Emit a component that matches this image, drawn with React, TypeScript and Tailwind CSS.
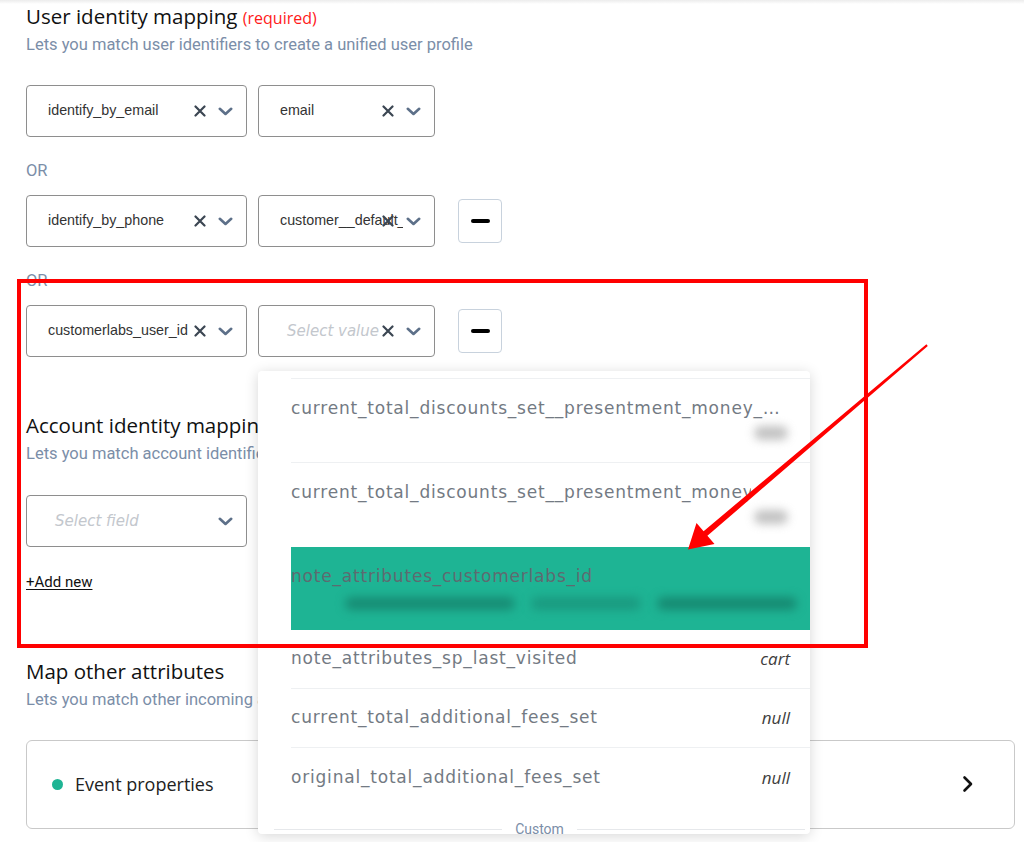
import React from "react";

const XIcon = () => (
  <svg width="12" height="12" viewBox="0 0 12 12" className="block">
    <path d="M1.5 1.5 L10.5 10.5 M10.5 1.5 L1.5 10.5" stroke="#3b4652" strokeWidth="2.2" strokeLinecap="round" />
  </svg>
);

const ChevronDown = () => (
  <svg width="15" height="9" viewBox="0 0 15 9" className="block">
    <path d="M1.8 1.8 L7.5 7 L13.2 1.8" fill="none" stroke="#5d7089" strokeWidth="2.6" strokeLinecap="round" strokeLinejoin="round" />
  </svg>
);

const ChevronRight = () => (
  <svg width="12" height="18" viewBox="0 0 12 18" className="block">
    <path d="M2.5 2.5 L9 9 L2.5 15.5" fill="none" stroke="#111" strokeWidth="2.6" strokeLinecap="round" strokeLinejoin="round" />
  </svg>
);

function Select({
  wide,
  text,
  placeholder,
  clear = true,
  children,
}: {
  wide: boolean;
  text?: string;
  placeholder?: string;
  clear?: boolean;
  children?: React.ReactNode;
}) {
  return (
    <div
      className={`relative flex h-[52px] items-center rounded-[4px] border border-[#8e8e8e] bg-white ${
        wide ? "w-[221px]" : "w-[177px]"
      }`}
    >
      {text ? (
        <span className="min-w-0 flex-1 overflow-hidden whitespace-nowrap pl-[21px] text-[14.3px] text-[#333] [font-family:'Liberation_Sans',Arial,sans-serif]">
          {text}
        </span>
      ) : (
        <span className="min-w-0 flex-1 overflow-hidden whitespace-nowrap pl-[28px] text-[15px] italic text-[#c3c7cd] [font-family:'DejaVu_Sans',sans-serif]">
          {placeholder}
        </span>
      )}
      {clear && (
        <span className="absolute right-[40px] top-1/2 -translate-y-1/2">
          <XIcon />
        </span>
      )}
      <span className="ml-[3px] mr-[13px]">
        <ChevronDown />
      </span>
      {children}
    </div>
  );
}

const MinusButton = () => (
  <div className="ml-[12px] flex h-[44px] w-[44px] items-center justify-center rounded-[4px] border border-[#c8d2dd] bg-white">
    <div className="h-[4px] w-[19px] rounded-full bg-black" />
  </div>
);

const labelCls =
  "text-[17px] tracking-[0.8px] text-[#737a83] [font-family:'DejaVu_Sans',sans-serif] whitespace-nowrap";

function Dropdown() {
  return (
    <div className="absolute left-[-1px] top-[65px] z-10 h-[463px] w-[552px] overflow-hidden rounded-[4px] bg-white shadow-[0_2px_14px_rgba(0,0,0,0.16)]">
      <div className="pl-[33px]">
        <div className="h-[8px] border-b border-[#eef0f2]" />
        <div className="relative h-[84px] border-b border-[#eef0f2] pt-[17px]">
          <div className={`${labelCls} w-[496px] overflow-hidden text-ellipsis`}>
            current_total_discounts_set__presentment_money_amount
          </div>
          <div className="flex justify-end pr-[22px] pt-[4px]">
            <div className="h-[14px] w-[34px] rounded-full bg-[#a8a8a8] opacity-70 blur-[5px]" />
          </div>
        </div>
        <div className="relative h-[84px] pt-[17px]">
          <div className={`${labelCls} w-[460px] overflow-hidden`}>current_total_discounts_set__presentment_money_amount</div>
          <div className="flex justify-end pr-[22px] pt-[4px]">
            <div className="h-[14px] w-[34px] rounded-full bg-[#a8a8a8] opacity-70 blur-[5px]" />
          </div>
        </div>
        <div className="h-[83px] bg-[#1eb494] pt-[17px]">
          <div className="whitespace-nowrap text-[17px] tracking-[0.8px] text-[#5e6a70] [font-family:'DejaVu_Sans',sans-serif]">
            note_attributes_customerlabs_id
          </div>
          <div className="flex items-center gap-[16px] pl-[54px] pt-[7px]">
            <div className="h-[13px] w-[170px] rounded-full bg-[#178c74] blur-[5px]" />
            <div className="h-[13px] w-[110px] rounded-full bg-[#1a9a80] blur-[5px]" />
            <div className="h-[13px] w-[140px] rounded-full bg-[#168a72] blur-[5px]" />
          </div>
        </div>
        {[
          ["note_attributes_sp_last_visited", "cart"],
          ["current_total_additional_fees_set", "null"],
          ["original_total_additional_fees_set", "null"],
        ].map(([k, v], i) => (
          <div
            key={k}
            className={`flex h-[59px] items-center justify-between pr-[20px] ${
              i < 2 ? "border-b border-[#eef0f2]" : ""
            }`}
          >
            <span className={labelCls}>{k}</span>
            <span className="text-[17px] italic text-[#3d3d3d] [font-family:'Open_Sans',sans-serif]">{v}</span>
          </div>
        ))}
      </div>
      <div className="flex items-center gap-[13px] pl-[16px] pr-[5px] pt-[12px]">
        <div className="h-px flex-1 bg-[#e6e8eb]" />
        <span className="text-[14px] text-[#7b8ea8] [font-family:'Roboto',sans-serif]">Custom</span>
        <div className="h-px flex-1 bg-[#e6e8eb]" />
      </div>
    </div>
  );
}

const headingCls =
  "text-[20.5px] font-medium text-[#111] [font-family:'Open_Sans',sans-serif] leading-[24px] whitespace-nowrap";
const subCls =
  "text-[16.5px] leading-[20px] text-[#7b8ea8] [font-family:'Roboto',sans-serif] whitespace-nowrap";

export default function App() {
  return (
    <div className="relative min-h-[842px] w-[1024px] overflow-hidden bg-white">
      <div className="h-[4px] bg-gradient-to-b from-[#ececec] to-white" />
      <div className="pl-[26px] pr-[9px]">
        <div className={headingCls}>
          User identity mapping{" "}
          <span className="text-[16px] font-normal text-[#ff1a1a]">(required)</span>
        </div>
        <div className={`${subCls} mt-[5px]`}>Lets you match user identifiers to create a unified user profile</div>

        <div className="mt-[30px] flex items-center gap-[11px]">
          <Select wide text="identify_by_email" />
          <Select wide={false} text="email" />
        </div>

        <div className={`${subCls} mt-[24px]`}>OR</div>
        <div className="mt-[14px] flex items-center gap-[11px]">
          <Select wide text="identify_by_phone" />
          <Select wide={false} text="customer__default_address_phone" />
          <MinusButton />
        </div>

        <div className={`${subCls} mt-[24px]`}>OR</div>
        <div className="mt-[14px] flex items-center gap-[11px]">
          <Select wide text="customerlabs_user_id" />
          <Select wide={false} placeholder="Select value">
            <Dropdown />
          </Select>
          <MinusButton />
        </div>

        <div className={`${headingCls} mt-[56px]`}>Account identity mapping</div>
        <div className={`${subCls} mt-[7px]`}>Lets you match account identifiers to create a unified account profile</div>
        <div className="mt-[31px]">
          <Select wide placeholder="Select field" clear={false} />
        </div>
        <div className="mt-[24px] text-[15px] text-[#111] underline underline-offset-2 [font-family:'Roboto',sans-serif]">
          +Add new
        </div>

        <div className={`${headingCls} mt-[65px]`}>Map other attributes</div>
        <div className={`${subCls} mt-[7px]`}>Lets you match other incoming attributes to your destination fields</div>

        <div className="mt-[30px] flex h-[89px] items-center rounded-[6px] border border-[#c9c9c9] pl-[25px] pr-[40px]">
          <div className="h-[11px] w-[11px] rounded-full bg-[#1eb494]" />
          <span className="ml-[12px] flex-1 text-[18px] text-[#222] [font-family:'Open_Sans',sans-serif]">Event properties</span>
          <ChevronRight />
        </div>
      </div>

      {/* annotation: red box */}
      <div className="pointer-events-none absolute left-[17px] top-[279px] z-20 h-[369px] w-[851px] border-[4px] border-[#ff0000]" />
      {/* annotation: arrow */}
      <svg className="pointer-events-none absolute left-0 top-0 z-20" width="1024" height="842" viewBox="0 0 1024 842">
        <polygon
          points="927.8,346 707.4,535.8 714.5,544 688,549.5 696.5,523 703.6,531.2 926.4,344.2"
          fill="#ff0000"
        />
      </svg>
    </div>
  );
}
